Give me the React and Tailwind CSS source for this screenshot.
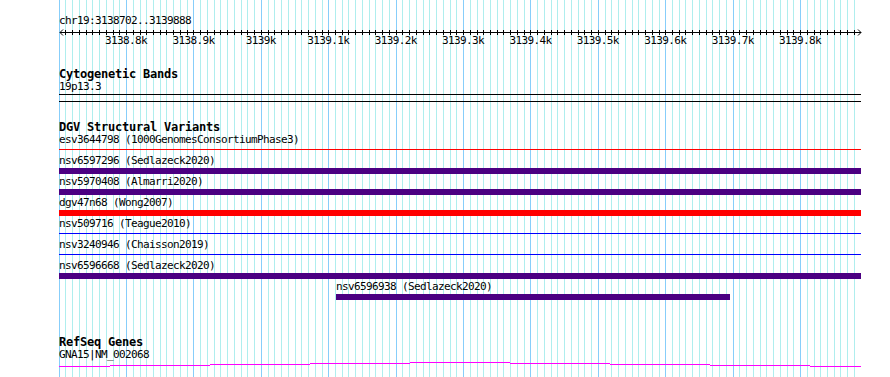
import React from "react";

const START = 3138702;
const END = 3139888;
const X0 = 60;
const SCALE = 0.674;
const LEFT = 59;
const TRACK_W = 802;

const px = (bp) => X0 + (bp - START) * SCALE;

const INDIGO = "bg-[#4b0082]";

const variants = [
  { name: "esv3644798 (1000GenomesConsortiumPhase3)", kind: "line", color: "bg-[#ff0000]" },
  { name: "nsv6597296 (Sedlazeck2020)", kind: "bar", color: INDIGO },
  { name: "nsv5970408 (Almarri2020)", kind: "bar", color: INDIGO },
  { name: "dgv47n68 (Wong2007)", kind: "bar", color: "bg-[#ff0000]" },
  { name: "nsv509716 (Teague2010)", kind: "line", color: "bg-[#0000ff]" },
  { name: "nsv3240946 (Chaisson2019)", kind: "line", color: "bg-[#0000ff]" },
  { name: "nsv6596668 (Sedlazeck2020)", kind: "bar", color: INDIGO },
  { name: "nsv6596938 (Sedlazeck2020)", kind: "bar", color: INDIGO, start: 3139111, end: 3139696 },
];

const geneSteps = [
  [59, 110, 366],
  [110, 210, 365],
  [210, 310, 364],
  [310, 410, 363],
  [410, 510, 362],
  [510, 610, 363],
  [610, 710, 364],
  [710, 810, 365],
  [810, 861, 366],
];

const gridStops = [];
for (let bp = 3138700; bp <= END; bp += 10) gridStops.push(bp);

const majorStops = gridStops.filter((bp) => bp % 100 === 0 && bp > 3138700);

const Grid = () => (
  <svg className="absolute left-0 top-0" width={890} height={377}>
    {gridStops.map((bp) => {
      const x = Math.round(px(bp)) + 0.5;
      return (
        <line
          key={bp}
          x1={x}
          x2={x}
          y1={0}
          y2={377}
          stroke={bp % 100 === 0 ? "#87cefa" : "#afeeee"}
          strokeWidth={1}
        />
      );
    })}
  </svg>
);

const Ruler = () => (
  <svg width={TRACK_W + 4} height={10} className="block">
    <line x1={1} x2={TRACK_W} y1={6.5} y2={6.5} stroke="#000" />
    <polyline points="4,3.5 1,6.5 4,9.5" fill="none" stroke="#000" />
    <polyline points={`${TRACK_W - 3},3.5 ${TRACK_W},6.5 ${TRACK_W - 3},9.5`} fill="none" stroke="#000" />
    {gridStops.slice(1).map((bp) => {
      const x = Math.round(px(bp)) - LEFT + 0.5;
      return <line key={bp} x1={x} x2={x} y1={4} y2={9} stroke="#000" />;
    })}
  </svg>
);

const VariantRow = ({ v }) => {
  const offset = v.start ? Math.round(px(v.start)) - LEFT : 0;
  const width = v.start ? Math.round(px(v.end) - px(v.start)) : TRACK_W;

  return (
    <div className="flex flex-col h-[21px]">
      <div className="h-[10px] leading-[10px] text-[11px] tracking-[-0.62px] whitespace-nowrap" style={{ paddingLeft: offset }}>
        {v.name}
      </div>
      <div className="mt-[2px] h-[6px]" style={{ marginLeft: offset, width }}>
        {v.kind === "bar" ? (
          <div className={`h-[6px] w-full ${v.color}`} />
        ) : (
          <div className={`mt-[2px] h-px w-full ${v.color}`} />
        )}
      </div>
    </div>
  );
};

const App = () => (
  <div className="relative w-[890px] h-[377px] overflow-hidden bg-white text-black font-['DejaVu_Sans_Mono',monospace]">
    <Grid />

    <div className="relative flex flex-col pl-[59px] pt-[16px]">
      {/* Ruler */}
      <div className="h-[10px] leading-[10px] text-[11px] tracking-[-0.62px] whitespace-nowrap">chr19:3138702..3139888</div>
      <Ruler />
      <div className="relative h-[10px] leading-[10px] text-[11px] tracking-[-0.62px]">
        {majorStops.map((bp) => (
          <span
            key={bp}
            className="absolute top-0 -translate-x-1/2 whitespace-nowrap"
            style={{ left: px(bp) - LEFT }}
          >
            {bp / 1000}k
          </span>
        ))}
      </div>

      {/* Cytogenetic Bands */}
      <div className="mt-[22px] h-[13px] leading-[13px] text-[12px] tracking-[-0.22px] font-bold whitespace-nowrap">Cytogenetic Bands</div>
      <div className="mt-[1px] h-[10px] leading-[10px] text-[11px] tracking-[-0.62px]">19p13.3</div>
      <div className="mt-[2px] w-[802px] h-[8px] border-y border-black" />

      {/* DGV */}
      <div className="mt-[19px] h-[13px] leading-[13px] text-[12px] tracking-[-0.22px] font-bold whitespace-nowrap">DGV Structural Variants</div>
      <div className="mt-[1px] flex flex-col w-[802px]">
        {variants.map((v) => (
          <VariantRow key={v.name} v={v} />
        ))}
      </div>

      {/* RefSeq */}
      <div className="mt-[33px] h-[13px] leading-[13px] text-[12px] tracking-[-0.22px] font-bold whitespace-nowrap">RefSeq Genes</div>
      <div className="mt-[1px] h-[10px] leading-[10px] text-[11px] tracking-[-0.62px]">GNA15|NM_002068</div>
      <svg width={TRACK_W} height={8} className="block">
        {geneSteps.map(([a, b, y]) => (
          <line key={a} x1={a - LEFT} x2={b - LEFT} y1={y - 360 + 0.5} y2={y - 360 + 0.5} stroke="#ff00ff" />
        ))}
      </svg>
    </div>
  </div>
);

export default App;
